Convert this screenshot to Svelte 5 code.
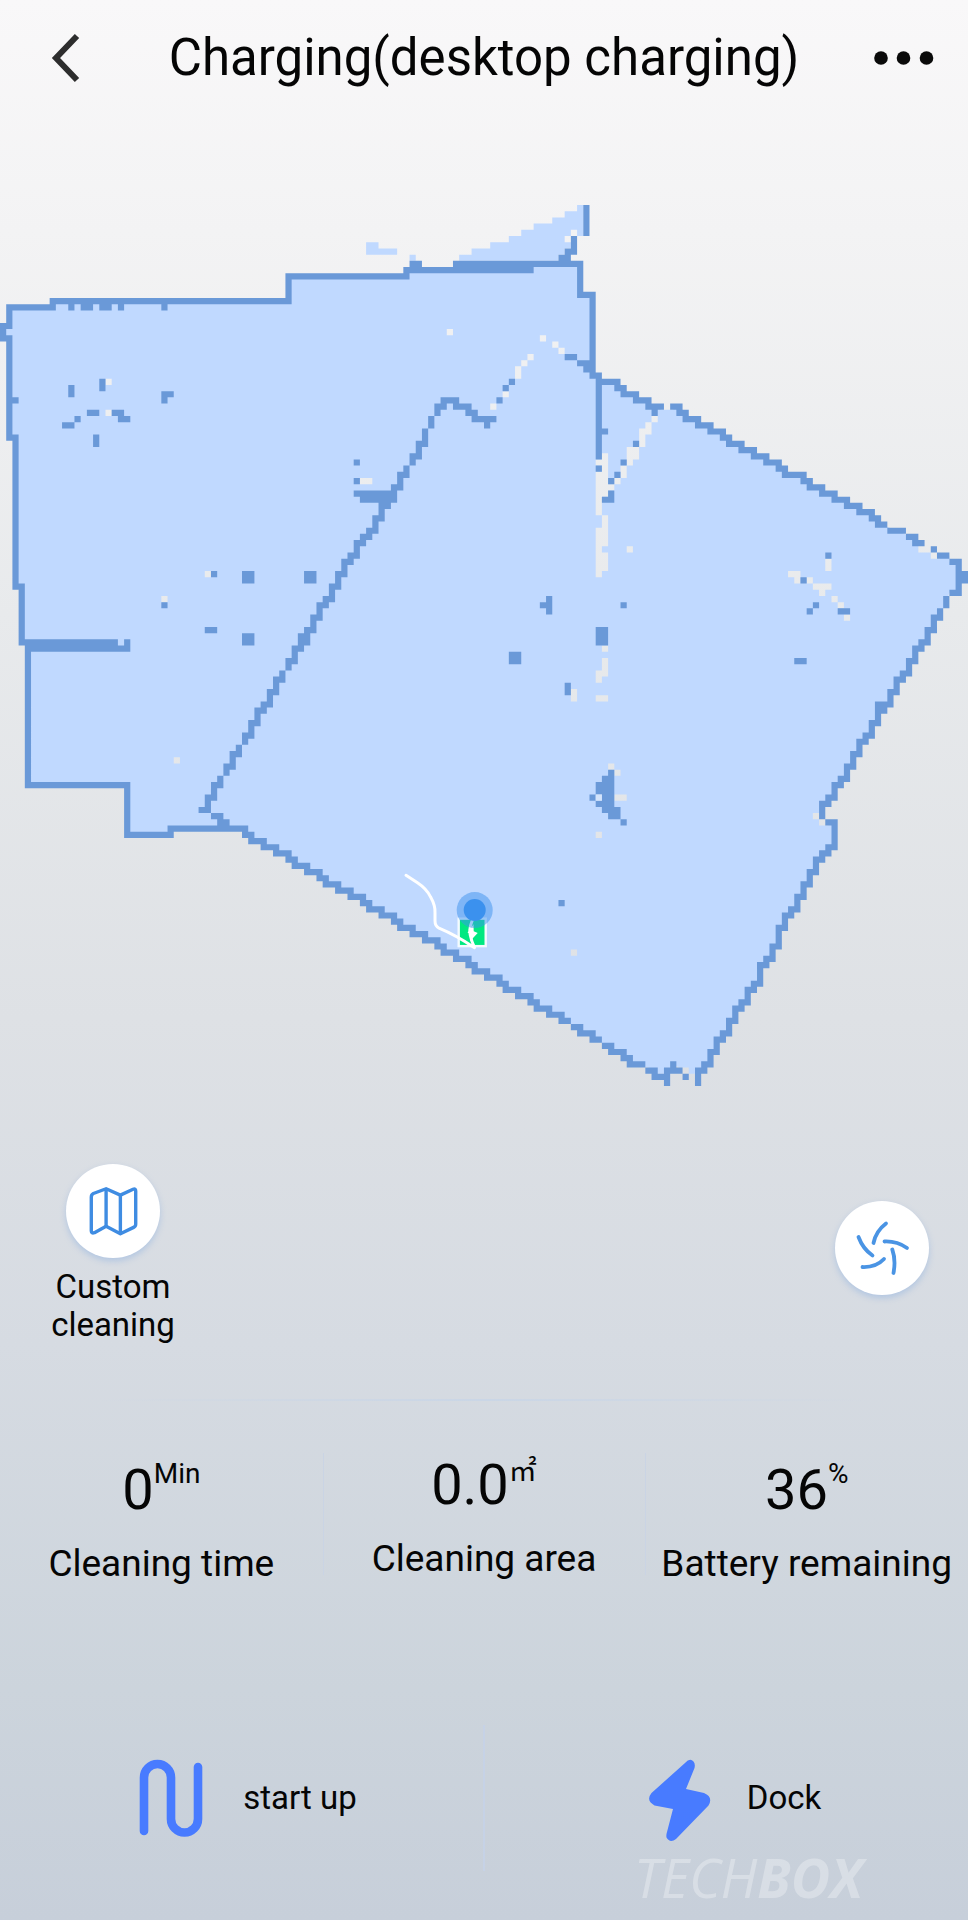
<script>
  // Map cells are written as "column,row,width,height"; width and height default to 1.
  const toPath = (cells) =>
    cells
      .trim()
      .split(/\s+/)
      .map((cell) => {
        const [x, y, w = 1, h = 1] = cell.split(',').map(Number);
        return `M${x} ${y}h${w}v${h}h${-w}z`;
      })
      .join('');

  const outline =
    'M1.5 16.5L8.5 16.5 8.5 15.5 46.5 15.5 46.5 11.5 65.5 11.5 65.5 10.5 73.5 10.5 73.5 9.5 93.5 9.5 93.5 14.5 95.5 14.5 95.5 27.5 96.5 28.5 98.5 28.5 101.5 30.5 103.5 31.5 105.5 32.5 106.5 32.5 106.5 33 108.5 33 108.5 32.5 109.5 32.5 111.5 34.5 115.5 36.5 117 37.5 118.5 38.5 122.5 40.5 124.5 41.5 126 42.5 128 43.5 130 44.5 131.5 45.5 135.5 47.5 139.5 49.5 141 50.5 142 51.5 144.5 52.5 147 53.5 148 54.5 148 56 150 56 150 57 151.5 57 151.5 56.5 153 56.5 153 57.5 154.5 57.5 154.5 62.5 153 62.5 152.5 64 151.5 66 150.5 67.5 149.5 69.5 148.5 71 147.5 72.5 146.5 74.5 144.5 77.5 142.5 81 140.5 84.5 139.5 86 138.5 87.5 137.5 89.5 136.5 91.5 135.5 93 134.5 94.5 133.5 96 132.5 97.5 132.5 98 131 98 131 99 132 99 132 100 133.5 100 133.5 99.5 134.5 99.5 134.5 103.5 133.5 104 132.5 105 131.5 106.5 130.5 108.5 129.5 110.5 128.5 112.5 127.5 114 126.5 115.5 125.5 118 124.5 120.5 123.5 122 122.5 124 121.5 126 120.5 127.5 119.5 129 118.5 130.5 117.5 132.5 116.5 134 115.5 135.5 114.5 137.5 113.5 139 112.5 139.5 112.5 140 111 140 111 139 109.5 139 108.5 138.5 107.5 139.5 107.5 140 106 140 104.5 139 102.5 138.5 101 137.5 99.5 136.5 98 135.5 97 135 96 134.5 94.5 133.5 93 132.5 91 131.5 89.5 130.5 87.5 129.5 86 128.5 84.5 127.5 82.5 126.5 81 125.5 79.5 124.5 77.5 123.5 76 122.5 74.5 121.5 72.5 120.5 71 119.5 69.5 118.5 67.5 117.5 65.5 116.5 64 115.5 62.5 114.5 60.5 113.5 59 112.5 57.5 111.5 55.5 110.5 53.5 109.5 52 108.5 50.5 107.5 48.5 106.5 47 105.5 45.5 104.5 43.5 103.5 41.5 102.5 40 101.5 39 100.5 27.5 100.5 27.5 101.5 20.5 101.5 20.5 93.5 4.5 93.5 4.5 71 3.5 70.5 3.5 61.5 2.5 61.5 2.5 37.5 1.5 37.5 1.5 21.5 .5 21.5 .5 19.5 1.5 19.5Z';

  const gaps = toPath(`
    17,28 17,33 72,20 87,21 89,22 90,23 85,24 84,25 83,26,1,2 81,30 79,32 58,44,2
    105,34 104,35,1,2 103,36,1,3 101,39,2,2 101,41 100,42,1,2 99,44
    97,40,1,7 98,45 96,41 96,43,1,7 97,50,1,5 96,52,1,8 97,56,1,3
    101,55 97,71 97,73,1,3 96,75,1,2 96,79,2,1 92,78,1,2
    133,57,1,2 127,59,2 128,60 130,60 131,61,3 132,62 134,63 135,64 136,66
    33,59 26,63 28,89 98,90 99,91 99,95,2 96,101 92,120`);

  const outside = toPath(`
    59,6,2 59,7,5 66,8 93,0 91,1,3 89,2,5 86,3,8 84,4,8 93,4 82,5,9 79,6,13 76,7,15 74,8,16`);

  const floor = outline + gaps;

  const walls = toPath(`
    1,16,8 8,15,39 46,11,1,5 46,11,20 11,16 13,16,2 16,16,2 19,16 26,16
    1,16,1,4 0,19,1,3 1,21,1,17 2,31 2,37,1,25 3,61,1,10 4,70,15 4,71,17 20,70
    4,71,1,23 4,93,17 20,93,1,9 20,101,8 27,100,13
    94,0,1,5 92,5,1,3 91,7,2 90,8,2 73,9,21 65,10,21 66,9,2 65,10,1,2
    93,9,1,6 93,14,3 95,14,1,14
    91,24,2 93,25,2 94,26 95,27,2 96,27,1,14 97,36 82,28 81,29 80,31
    71,31,3 70,32,2 73,32,3 70,33 75,33,2 76,34,4 78,35
    69,34,1,2 68,36,1,3 67,38,1,3 66,40,1,2 65,42,1,2 64,43,1,3 63,45,1,3
    57,46,7 58,47,6 61,48,2 61,48,1,3 57,41 57,44
    60,50,1,3 59,52,1,2 58,53,1,2 57,54,1,3 56,56,1,2 55,57,1,3 54,59,1,3 53,61,1,3
    52,63,1,2 51,64,1,3 50,66,1,3 49,68,1,3 48,69,1,3 47,71,1,3 46,73,1,2 45,75,1,2
    44,76,1,3 43,78,1,3 42,80,1,2 41,81,1,3 40,83,1,3 39,85,1,2 38,87,1,2 37,88,1,3
    36,90,1,2 35,92,1,2 34,93,1,3 33,95,1,3 32,97 34,98,2 35,99,2
    97,28,3 99,29,2 100,30,3 102,31,3 104,32,3 108,32,2 105,33 109,33,2 110,34,3
    112,35,3 114,36,3 116,37,2 117,38,3 119,39,3 121,40,3 123,41,3 125,42,2 126,43,4
    129,44,2 130,45,3 132,46,3 134,47,3 136,48,3 138,49,3 140,50,2 141,51,2 143,52,3
    146,53,2 147,54,2 150,55 151,56,2 153,57,2 154,57,1,6 155,59,1,2 153,62,2
    152,63,1,2 151,65,1,2 150,66,1,3 149,68,1,3 148,70,1,2 147,71,1,3 146,73,1,3
    145,75,1,2 144,76,1,3 143,78,1,3 142,80,1,2 141,80,1,4 140,83,1,3 139,85,1,2
    138,86,1,3 137,88,1,3 136,90,1,3 135,92,1,2 134,93,1,3 133,95,1,2 132,96,1,3
    133,99,2 134,99,1,5 133,103,1,2 132,104,1,2 131,105,1,3 130,107,1,3 129,109,1,3
    128,111,1,3 127,113,1,2 126,114,1,3 125,116,1,4 124,119,1,3 123,121,1,2
    122,122,1,4 121,125,1,2 120,126,1,3 119,128,1,2 118,129,1,3 117,131,1,3
    116,133,1,2 115,134,1,3 114,136,1,3 113,138,1,2 112,139,1,3
    39,101,2 40,102,3 42,103,3 44,104,3 46,105,2 47,106,3 49,107,3 51,108,2 52,109,3
    54,110,3 56,111,3 58,112,2 59,113,3 61,114,3 63,115,2 64,116,3 66,117,3 68,118,3
    70,119,2 71,120,3 73,121,3 75,122,2 76,123,3 78,124,3 80,125,2 81,126,3 83,127,3
    85,128,2 86,129,3 88,130,3 90,131,2 92,132,2 93,133,3 95,134,2 97,135,2 98,136,3
    100,137,2 101,138,3 104,139,2 105,140,3 107,139,1,3 107,139,3 108,138 110,140
    11,29,1,2 16,28,1,2 14,33,2 18,33,2 19,34,2 12,34 10,35,2 15,37,1,2 26,30,2 26,31
    34,59 39,59,2,2 49,59,2,2 26,64 33,68,2 39,69,2,2
    96,42 102,38 100,41 99,43 98,44 98,46,1,2 97,47 100,64 96,68,2,3
    133,56 129,60 131,64 130,65 135,65,2 128,73,2
    87,64 88,63,1,3 82,72,2,2 91,77,1,2 90,112
    98,91 97,92,2 96,93,3,2 95,95 97,95,2 96,96,3 97,97,3 98,98,2 100,99`);
</script>

<div class="app">
  <header>
    <button class="plain" aria-label="Back">
      <svg width="34" height="52" viewBox="0 0 34 52" aria-hidden="true">
        <path d="M30 4L9 26l21 22" fill="none" stroke="#2d2d2d" stroke-width="6" />
      </svg>
    </button>
    <h1>Charging(desktop charging)</h1>
    <button class="plain" aria-label="More">
      <svg width="60" height="20" viewBox="0 0 60 20" aria-hidden="true">
        <g fill="#0a0a0a">
          <circle cx="7" cy="10" r="6.800" />
          <circle cx="29.500" cy="10" r="6.800" />
          <circle cx="52.500" cy="10" r="6.800" />
        </g>
      </svg>
    </button>
  </header>

  <svg class="map" viewBox="0 0 156 142" role="img" aria-label="Cleaning map">
    <path d={floor} fill="#c0d9ff" fill-rule="evenodd" />
    <path d={outside} fill="#c0d9ff" />
    <path d={walls} fill="#6a99d8" />
    <path d="M96 95h1v1h-1z" fill="#d4e4fb" />
    <g transform="scale(.16116) translate(0 -204.670)">
      <rect x="458.700" y="918.300" width="27" height="27.500" fill="#00e881" stroke="#f4faff" stroke-width="2.400" />
      <path d="M473.500 924l-6 8.500 3.500 1.200-.8 7 7.500-8-4-1.700z" fill="#fff" />
      <path
        d="M406 875l11.500 7.500q9 6 13 14 5 9 4.500 16v8q0 5.500 4 7.300c12 5 22 10.500 35.500 19.500q-6.500-14-4-22l2-6"
        fill="none"
        stroke="#fff"
        stroke-width="3"
        stroke-linecap="round"
        stroke-linejoin="round"
      />
      <circle cx="474.700" cy="909.700" r="18" fill="#3b91ee" fill-opacity=".5" />
      <circle cx="474.700" cy="909.700" r="11" fill="#3b91ee" />
    </g>
  </svg>

  <section class="controls">
    <button class="plain custom">
      <span class="disc">
        <svg width="55" height="55" viewBox="0 0 52 52" aria-hidden="true">
          <g fill="none" stroke="#3f8ce2" stroke-width="3.200" stroke-linejoin="round">
            <path d="M5 12.500Q5 10 7 9L19 4.500 32.500 10.500 44.500 5Q47 4 47 6.500V38Q47 40 45 41L32.500 47 19 40 8 46Q5 47 5 44.500z" />
            <path d="M19 4.500V40M32.500 10.500V47" />
          </g>
        </svg>
      </span>
      <span class="caption">Custom cleaning</span>
    </button>
    <button class="plain fan" aria-label="Suction">
      <span class="disc">
        <svg width="56" height="56" viewBox="0 0 56 56" aria-hidden="true">
          <g fill="none" stroke="#4a94e4" stroke-width="3.800" stroke-linecap="round">
            <path d="M32 3.500Q22 11 19.500 23" />
            <path d="M30.500 21.500Q43 21 53 28" />
            <path d="M38.300 29.500Q42 40 39.500 53" />
            <path d="M30 39Q22 47.500 8.500 47" />
            <path d="M4.500 17Q9 29 18.500 35.500" />
          </g>
        </svg>
      </span>
    </button>
  </section>

  <hr />

  <section class="stats">
    <div class="stat">
      <div class="value">0<span class="unit">Min</span></div>
      <div class="label">Cleaning time</div>
    </div>
    <div class="stat area">
      <div class="value">0.0<span class="unit square">㎡</span></div>
      <div class="label">Cleaning area</div>
    </div>
    <div class="stat">
      <div class="value">36<span class="unit">%</span></div>
      <div class="label">Battery remaining</div>
    </div>
  </section>

  <footer>
    <button class="plain action">
      <svg width="88" height="88" viewBox="0 0 88 88" aria-hidden="true">
        <path
          d="M17 77V23.500a13.500 13.500 0 0 1 27 0V65a13.500 13.500 0 0 0 27 0V13"
          fill="none"
          stroke="#487bff"
          stroke-width="8.600"
          stroke-linecap="round"
        />
      </svg>
      start up
    </button>
    <button class="plain action">
      <svg width="88" height="88" viewBox="0 0 88 88" aria-hidden="true">
        <path
          d="M54 9Q59 3.500 62.500 7.500 64.500 10 63.500 14L55 35 73 39Q82.500 43 77.500 51.500L45 85Q39 89.500 35.500 83.500 35 81 36 78L42 55 23.500 51.500Q14.500 46.500 20.500 39z"
          fill="#487bff"
        />
      </svg>
      Dock
    </button>
    <div class="mark">TECH<b>BOX</b></div>
  </footer>
</div>

<style>
  :global(body) {
    margin: 0;
  }

  .app {
    display: flex;
    flex-direction: column;
    box-sizing: border-box;
    min-height: 100vh;
    padding-bottom: 48px;
    overflow: hidden;
    color: #050505;
    font-family: Roboto, sans-serif;
    background: linear-gradient(#f9f8f9 0%, #f3f3f4 12%, #e8eaec 32%, #dee1e5 53%, #d6dbe2 70%, #ccd4dc 88%, #c7cfda 100%);
  }

  .plain {
    display: flex;
    align-items: center;
    justify-content: center;
    padding: 0;
    border: 0;
    background: none;
    color: inherit;
    font: inherit;
    cursor: pointer;
  }

  header {
    display: grid;
    grid-template-columns: 60px 1fr 60px;
    align-items: center;
    height: 116px;
    padding: 0 34px;
  }

  h1 {
    margin: 0;
    font-size: 51px;
    font-weight: 400;
    line-height: 60px;
    text-align: center;
    white-space: nowrap;
  }

  .map {
    display: block;
    width: 100%;
    height: auto;
    margin-top: 89px;
  }

  .controls {
    display: flex;
    align-items: center;
    justify-content: space-between;
    padding: 78px 39px 55px 49px;
  }

  .custom {
    flex-direction: column;
    gap: 10px;
    width: 128px;
  }

  .disc {
    display: flex;
    align-items: center;
    justify-content: center;
    width: 94px;
    height: 94px;
    border-radius: 50%;
    background: #fff;
    box-shadow: 0 3px 6px rgba(120, 165, 225, 0.4);
  }

  .caption {
    font-size: 33px;
    line-height: 38px;
    text-align: center;
  }

  .fan {
    margin-bottom: 12px;
  }

  hr {
    width: 100%;
    height: 2px;
    margin: 0;
    border: 0;
    background: linear-gradient(90deg, transparent 10%, #cad6e6 50%, transparent 90%);
  }

  .stats {
    display: grid;
    grid-template-columns: repeat(3, 1fr);
    padding-top: 52px;
  }

  .stat {
    padding-top: 5px;
    text-align: center;
    white-space: nowrap;
  }

  .stat:not(:first-child) {
    background: linear-gradient(#cad4e4, #cad4e4) left top / 1px 122px no-repeat;
  }

  .area {
    padding-top: 0;
  }

  .value {
    display: flex;
    align-items: flex-start;
    justify-content: center;
    font-size: 56px;
    line-height: 64px;
  }

  .unit {
    font-size: 28px;
    line-height: 32px;
  }

  .square {
    font-family: 'Noto Sans CJK SC', sans-serif;
  }

  .label {
    margin-top: 20px;
    font-size: 37px;
    line-height: 44px;
  }

  footer {
    position: relative;
    display: grid;
    grid-template-columns: 1fr 1fr;
    margin-top: 139px;
    background: linear-gradient(#c6d2e6, #c6d2e6) center / 2px 100% no-repeat;
  }

  .action {
    gap: 28px;
    height: 146px;
    font-size: 33px;
    line-height: 38px;
  }

  .mark {
    position: absolute;
    right: 105px;
    bottom: -36px;
    color: rgba(255, 255, 255, 0.3);
    font-family: 'Open Sans', sans-serif;
    font-size: 54px;
    font-style: italic;
    line-height: 60px;
    pointer-events: none;
  }
</style>
